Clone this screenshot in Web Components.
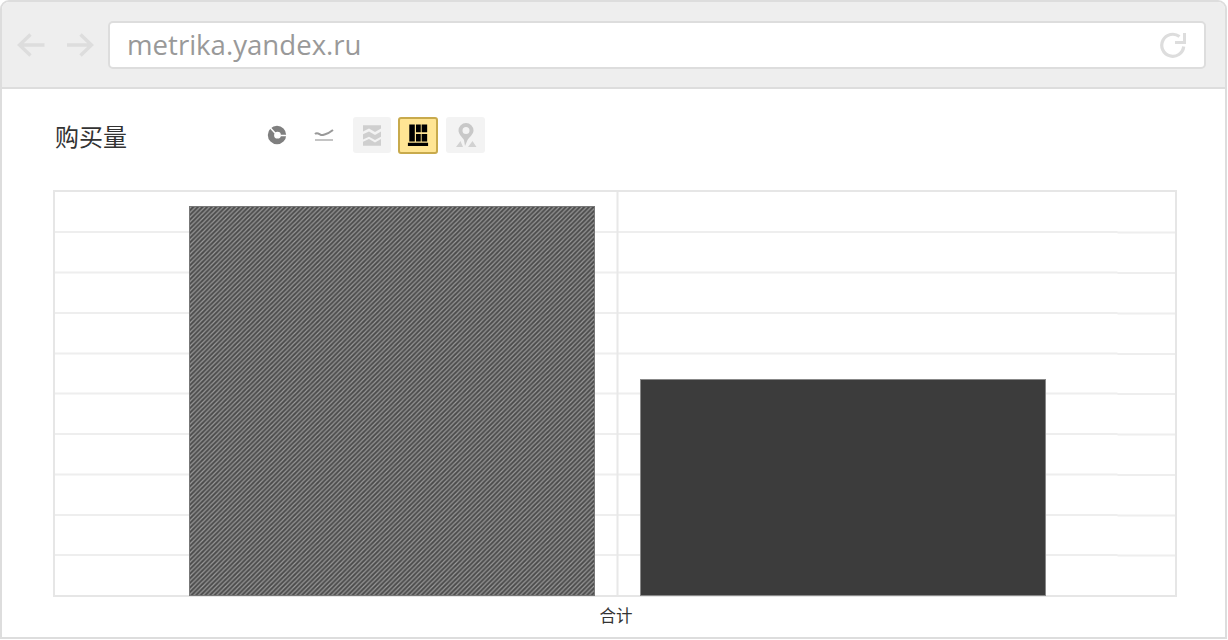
<!DOCTYPE html>
<html><head><meta charset="utf-8">
<style>html,body{margin:0;padding:0;background:#fff}</style>
</head><body>
<browser-frame url="metrika.yandex.ru">
  <report-head title="购买量"></report-head>
  <bar-chart label="合计"></bar-chart>
</browser-frame>
<script>
class BrowserFrame extends HTMLElement{
  constructor(){super();const s=this.attachShadow({mode:'open'});
  s.innerHTML=`<style>
  :host{display:block;width:1228px;height:640px;box-sizing:border-box;padding:0 1px 1px 0;font-family:"Open Sans",sans-serif}
  .win{box-sizing:border-box;height:639px;width:1227px;border:2px solid #ddd;border-radius:9px 9px 0 0;background:#fff;display:flex;flex-direction:column}
  .bar{box-sizing:border-box;height:87px;flex:none;background:#eee;border-bottom:2px solid #ddd;border-radius:7px 7px 0 0;padding:19px 19px 0 15px;display:flex;align-items:flex-start}
  .nav{display:flex;gap:18px;padding-top:9px;width:91px;flex:none}
  .addr{box-sizing:border-box;flex:1;height:48px;background:#fff;border:2px solid #ddd;border-radius:5px;display:flex;align-items:center;justify-content:space-between;padding:0 17px 0 17px;font-size:27.6px;color:#999}
  .addr span{line-height:44px;margin-top:-2px}
  svg{display:block;fill:none}
  main{flex:1;min-height:0}
  </style>
  <div class="win"><div class="bar">
    <div class="nav">
      <svg width="30" height="30" viewBox="0 0 30 30" stroke="#ddd" stroke-width="3.4"><path d="M27.500 15H3M13.500 4.500 2.500 15l11 10.500"/></svg>
      <svg width="30" height="30" viewBox="0 0 30 30" stroke="#ddd" stroke-width="3.4"><path d="M2 15h24M15.500 4.500 26.500 15l-11 10.500"/></svg>
    </div>
    <div class="addr"><span>${this.getAttribute('url')}</span>
      <svg width="28" height="28" viewBox="0 0 28 28" stroke="#ddd" stroke-width="3.200"><path d="M24.700 15.500A11 11 0 1 1 20.500 5.600"/><path d="M25.500 2v9.500H16" stroke-width="3"/></svg>
    </div>
  </div><main><slot></slot></main></div>`;}
}
customElements.define('browser-frame',BrowserFrame);

class ReportHead extends HTMLElement{
  constructor(){super();const s=this.attachShadow({mode:'open'});
  s.innerHTML=`<style>
  :host{display:flex;align-items:center;height:102px;box-sizing:border-box;padding:0 0 6px 53px}
  h1{margin:0 0 2px;width:199px;flex:none;font:400 24px/32px "Noto Sans CJK SC",sans-serif;color:#333}
  .tools{display:flex;align-items:center;height:38px;margin:0 0 4px -1px}
  .b{box-sizing:border-box;width:38px;height:36px;border-radius:3px;display:flex;align-items:center;justify-content:center;flex:none}
  .g{background:#f3f3f3}
  .on{width:40px;height:37px;background:#ffe594;border:2px solid #c8aa4c;margin:0 8px 0 7px}
  .m{width:39px}
  svg{display:block;filter:blur(.45px)}
  </style>
  <h1>${this.getAttribute('title')}</h1>
  <div class="tools">
    <div class="b" style="width:48px"><svg width="20" height="20" viewBox="0 0 20 20"><path fill="#7f7f7f" fill-rule="evenodd" d="M10 .8a9.200 9.200 0 1 1 0 18.400A9.200 9.200 0 0 1 10 .800zm.5 6a3.400 3.400 0 1 0 0 6.800 3.400 3.400 0 0 0 0-6.800z"/><path stroke="#fff" stroke-width="1.500" fill="none" d="M3 2.500 8 8M13.500 10.500H20"/></svg></div>
    <div class="b" style="width:48px;margin-left:-1px"><svg width="20" height="16" viewBox="0 0 20 16" fill="none" stroke="#999" stroke-width="2"><path d="M1 7c3-3 5 2 8 1s5-1 10-5"/><path d="M1 13h18" stroke="#c4c4c4"/></svg></div>
    <div class="b g" style="margin-left:5px"><svg width="22" height="23" viewBox="0 0 22 20" preserveAspectRatio="none" fill="#cfcfcf"><path d="M2 1h18v3L14 7 8 4 2 6.500zM2 9l6-2.500 6 3 6-3V11l-6 3-6-3-6 2.500zM2 15.500l6-2.500 6 3 6-3V19H2z"/></svg></div>
    <div class="b on"><svg width="22" height="24" viewBox="0 0 24 26" preserveAspectRatio="none" fill="#000"><path d="M2.500 1.500h6V20h-6zM9.800 12H15v8H9.800zM9.800 1.500H15V10H9.800zM16 1.500h6V10H16zM16 12h6v8H16zM1 21.500h22V25H1z"/></svg></div>
    <div class="b g m"><svg width="24" height="26" viewBox="0 0 24 26"><path fill="#c8c8c8" fill-rule="evenodd" d="M12 1a7.500 7.500 0 0 1 7.500 7.500c0 3.500-3.500 6-6 9.500l-2.500 6-1-6C8 15 4.500 12 4.500 8.500A7.500 7.500 0 0 1 12 1zm0 4a3.500 3.500 0 1 0 0 7 3.500 3.500 0 0 0 0-7z"/><path fill="#d2d2d2" d="M2 25l4.500-6 2.500 6zM14 25l4.500-6 4 6z"/></svg></div>
  </div>`;}
}
customElements.define('report-head',ReportHead);

class BarChart extends HTMLElement{
  constructor(){super();const s=this.attachShadow({mode:'open'});
  const ys=[232,272.5,313,353.5,393.5,434,474.5,515,555];
  const lines=ys.map(y=>`<path d="M1 ${y}H1064.500M1064.500 ${y+.6}H1122"/>`).join('');
  s.innerHTML=`<style>
  :host{display:block;padding:0 0 0 51px}
  svg{display:block}
  .l{font:400 16.500px/20px "Noto Sans CJK SC",sans-serif;color:#333;width:1126px;text-align:center;padding-top:7px;box-sizing:border-box}
  </style>
  <svg width="1125" height="408" viewBox="0 0 1125 408" style="margin-top:-1px">
    <defs><pattern id="h" width="4" height="4" patternUnits="userSpaceOnUse" patternTransform="scale(1.15)">
      <rect width="4" height="4" fill="#9a9a9a"/>
      <path d="M-1 3 3-1M-1 7 7-1M3 7l4-4" stroke="#4c4c4c" stroke-width="1.800"/>
    </pattern></defs>
    <g transform="translate(0,-190)" fill="none" stroke="#eee" stroke-width="2">
      ${lines}
      <path d="M564.500 191V596" stroke="#e8e8e8"/>
      <path d="M1 191H1123V596H1 Z" stroke="#e6e6e6"/>
      <rect x="136" y="206" width="406" height="390" fill="url(#h)" stroke="none"/>
      <rect x="136.500" y="206.500" width="405" height="389" fill="none" stroke="#777" stroke-width="1"/>
      <rect x="587.500" y="379.500" width="405" height="216" fill="#3c3c3c" stroke="#888" stroke-width="1"/>
    </g>
  </svg>
  <div class="l">${this.getAttribute('label')}</div>`;}
}
customElements.define('bar-chart',BarChart);
</script>
</body></html>
